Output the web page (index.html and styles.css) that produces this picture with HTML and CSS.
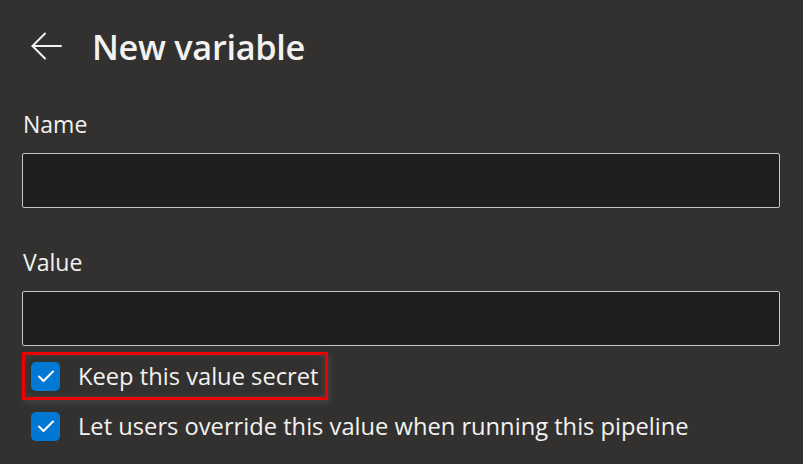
FILE: index.html
```html
<!DOCTYPE html>
<html lang="en">
<head>
<meta charset="utf-8">
<title>New variable</title>
<link rel="stylesheet" href="styles.css">
</head>
<body>
<div class="panel">
  <div class="header">
    <button class="back" aria-label="Back">
      <svg width="31" height="28" viewBox="0 0 31 28" fill="none" stroke="#f3f2f1" stroke-width="2" stroke-linecap="round" stroke-linejoin="round">
        <path d="M14 1.5 L1.5 14 L14 26.5"/>
        <path d="M1.5 14 H30"/>
      </svg>
    </button>
    <h1 class="title">New variable</h1>
  </div>
  <div class="form">
    <div class="field">
      <label class="label">Name</label>
      <div class="input"></div>
    </div>
    <div class="field">
      <label class="label">Value</label>
      <div class="input"></div>
    </div>
  </div>
  <div class="checks">
    <div class="check highlight">
      <span class="box"><svg width="18" height="14" viewBox="0 0 18 14" fill="none" stroke="#fff" stroke-width="2" stroke-linecap="round" stroke-linejoin="round"><path d="M2 7.5 L6.5 12 L16 2.5"/></svg></span>
      <span class="text">Keep this value secret</span>
    </div>
    <div class="check">
      <span class="box"><svg width="18" height="14" viewBox="0 0 18 14" fill="none" stroke="#fff" stroke-width="2" stroke-linecap="round" stroke-linejoin="round"><path d="M2 7.5 L6.5 12 L16 2.5"/></svg></span>
      <span class="text">Let users override this value when running this pipeline</span>
    </div>
  </div>
</div>
</body>
</html>
```

FILE: styles.css
```css
html, body {
  margin: 0;
  padding: 0;
  background: #323130;
}
body {
  font-family: "Open Sans", "Noto Sans", "Liberation Sans", sans-serif;
  color: #f3f2f1;
  width: 803px;
  height: 464px;
  overflow: hidden;
}
.panel {
  padding: 0 23px 0 22px;
  display: flex;
  flex-direction: column;
}
.header {
  display: flex;
  align-items: center;
  height: 92px;
  gap: 30px;
  padding-left: 9px;
}
.back {
  background: none;
  border: 0;
  padding: 0;
  width: 31px;
  height: 28px;
  display: flex;
}
.title {
  margin: 0;
  font-size: 34.3px;
  font-weight: 600;
  letter-spacing: -0.3px;
  color: #f3f2f1;
}
.form {
  display: flex;
  flex-direction: column;
  gap: 22px;
}
.field {
  display: flex;
  flex-direction: column;
}
.label {
  font-size: 23px;
  line-height: 30px;
  padding: 17px 0 14px 1px;
  color: #f3f2f1;
}
.input {
  height: 53px;
  background: #201f1e;
  border: 1px solid #c8c6c4;
  border-radius: 2px;
}
.checks {
  display: flex;
  flex-direction: column;
  margin-top: 6px;
  gap: 2px;
}
.check {
  display: flex;
  align-items: center;
  gap: 18px;
  height: 48px;
  padding-left: 9px;
  align-self: flex-start;
  box-sizing: border-box;
}
.highlight {
  border: 3px solid #f00000;
  padding-left: 6px;
  padding-right: 7px;
  box-shadow: 2px 3px 6px rgba(255,255,255,0.09), inset 0 0 6px rgba(255,255,255,0.1);
}
.box {
  width: 29px;
  height: 29px;
  border-radius: 5px;
  background: #0078d4;
  display: flex;
  align-items: center;
  justify-content: center;
  flex: none;
}
.text {
  font-size: 23.7px;
  line-height: 30px;
}
```
